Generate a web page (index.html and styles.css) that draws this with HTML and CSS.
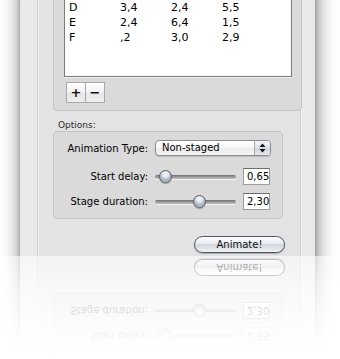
FILE: index.html
```html
<!DOCTYPE html>
<html>
<head>
<meta charset="utf-8">
<link rel="stylesheet" href="styles.css">
</head>
<body>
<div class="scene">
  <div class="window">
    <div class="column">
      <div class="group top-group">
        <div class="table">
          <div class="trow"><span>D</span><span>3,4</span><span>2,4</span><span>5,5</span></div>
          <div class="trow"><span>E</span><span>2,4</span><span>6,4</span><span>1,5</span></div>
          <div class="trow"><span>F</span><span>,2</span><span>3,0</span><span>2,9</span></div>
        </div>
        <div class="addremove">
          <button class="sq">+</button><button class="sq">−</button>
        </div>
      </div>
      <div class="options-label">Options:</div>
      <div class="group options">
        <div class="orow first">
          <span class="lbl">Animation Type:</span>
          <div class="popup">
            <span class="ptext">Non-staged</span>
            <span class="arrows">
              <svg width="7" height="10" viewBox="0 0 7 10"><path d="M3.5 0.5 L6.5 4 L0.5 4 Z" fill="#111"/><path d="M0.5 6 L6.5 6 L3.5 9.5 Z" fill="#111"/></svg>
            </span>
          </div>
        </div>
        <div class="orow">
          <span class="lbl">Start delay:</span>
          <div class="slider"><div class="track"></div><div class="knob" style="left:4px"></div></div>
          <div class="field">0,65</div>
        </div>
        <div class="orow">
          <span class="lbl">Stage duration:</span>
          <div class="slider"><div class="track"></div><div class="knob" style="left:38px"></div></div>
          <div class="field">2,30</div>
        </div>
      </div>
      <div class="actions">
        <button class="animate">Animate!</button>
      </div>
    </div>
  </div>
</div>
<div class="reflection" aria-hidden="true">
  <div class="scene flip">
    <div class="window">
      <div class="column">
        <div class="group top-group">
          <div class="table"></div>
          <div class="addremove">
            <span class="sq"></span><span class="sq"></span>
          </div>
        </div>
        <div class="options-label"></div>
        <div class="group options">
          <div class="orow first">
            <span class="lbl"></span>
            <div class="popup">
              <span class="ptext"></span>
              <span class="arrows"></span>
            </div>
          </div>
          <div class="orow">
            <span class="lbl">Start delay:</span>
            <div class="slider"><div class="track"></div><div class="knob" style="left:4px"></div></div>
            <div class="field">0,65</div>
          </div>
          <div class="orow">
            <span class="lbl">Stage duration:</span>
            <div class="slider"><div class="track"></div><div class="knob" style="left:38px"></div></div>
            <div class="field">2,30</div>
          </div>
        </div>
        <div class="actions">
          <button class="animate">Animate!</button>
        </div>
      </div>
    </div>
  </div>
</div>
</body>
</html>
```
FILE: styles.css
```css
html, body {
  margin: 0;
  padding: 0;
  background: #ffffff;
}
body {
  font-family: "DejaVu Sans", "Liberation Sans", sans-serif;
  font-size: 10px;
  color: #000;
  overflow: hidden;
}
.scene {
  width: 340px;
  height: 256px;
  overflow: hidden;
  background: #ffffff;
}
.reflection {
  position: relative;
  width: 340px;
  height: 103px;
  overflow: hidden;
}
.flip {
  transform: scaleY(-1);
}
.reflection::after {
  content: "";
  position: absolute;
  left: 0;
  top: 0;
  right: 0;
  bottom: 0;
  background: linear-gradient(to bottom, rgba(255,255,255,0.58) 0px, rgba(255,255,255,0.78) 35px, rgba(255,255,255,0.9) 65px, rgba(255,255,255,0.97) 85px, #ffffff 103px);
}
.window {
  margin-top: -20px;
  margin-left: 20px;
  width: 295px;
  height: 300px;
  background: #e9e9e9;
  box-shadow: 1px 2px 18px rgba(0,0,0,0.55), 0 0 3px rgba(0,0,0,0.25);
  display: flex;
}
.column {
  margin-left: 17px;
  width: 262px;
  border-left: 1px solid #cfcfcf;
  border-right: 1px solid #cfcfcf;
  box-shadow: inset 1px 0 0 #f2f2f2, 1px 0 0 #f4f4f4;
  background: #e3e3e3;
  display: flex;
  flex-direction: column;
}
.group {
  margin-left: 15px;
  width: 228px;
  border: 1px solid #c6c6c6;
  border-radius: 4px;
  background: #dadada;
}
.top-group {
  margin-top: 8px;
  padding: 9px 9px 7px 10px;
}
.table {
  box-sizing: border-box;
  height: 79px;
  background: #fff;
  border: 1px solid #7d7d7d;
  box-shadow: inset 0 0 1px rgba(0,0,0,0.3), 0 1px 0 rgba(255,255,255,0.6);
  padding: 1px 0 0 4px;
  font-size: 11px;
}
.trow {
  display: grid;
  grid-template-columns: 51px 51px 51px 51px;
  height: 15px;
  line-height: 15px;
}
.addremove {
  margin-top: 5px;
  margin-left: 2px;
  display: flex;
}
.sq {
  box-sizing: border-box;
  display: block;
  width: 20px;
  height: 21px;
  padding: 0;
  margin: 0;
  border: 1px solid #a9a9a9;
  background: linear-gradient(#ffffff, #f1f1f1 50%, #e6e6e6 51%, #eeeeee);
  font-family: "DejaVu Sans", sans-serif;
  font-size: 13px;
  font-weight: bold;
  line-height: 18px;
  text-align: center;
  color: #111;
}
.sq + .sq {
  border-left: none;
  width: 19px;
}
.options-label {
  margin-top: 8px;
  margin-left: 20px;
  height: 12px;
  line-height: 12px;
  font-size: 9px;
  color: #2a2a2a;
}
.options {
  padding: 8px 0 8px 0;
  display: flex;
  flex-direction: column;
  gap: 8px;
}
.orow {
  display: grid;
  grid-template-columns: 94px 81px 27px;
  column-gap: 7px;
  align-items: center;
  height: 17px;
}
.orow.first {
  height: 16px;
  margin-bottom: 4px;
}
.lbl {
  text-align: right;
  white-space: nowrap;
}
.popup {
  grid-column: 2 / 4;
  width: 116px;
  height: 16px;
  box-sizing: border-box;
  border: 1px solid #8c8c8c;
  border-radius: 4px;
  background: linear-gradient(#ffffff, #f6f6f6 50%, #ececec 51%, #f3f3f3);
  box-shadow: 0 1px 1px rgba(0,0,0,0.15);
  display: flex;
  align-items: center;
}
.ptext {
  flex: 1;
  padding-left: 6px;
  line-height: 14px;
}
.arrows {
  width: 15px;
  height: 14px;
  border-left: 1px solid #a8a8a8;
  display: flex;
  align-items: center;
  justify-content: center;
  background: linear-gradient(#f4f6f9, #dde2e8 50%, #cfd6de 51%, #e4e8ee);
  border-radius: 0 3px 3px 0;
}
.slider {
  position: relative;
  height: 17px;
  display: flex;
  align-items: center;
}
.track {
  width: 81px;
  height: 4px;
  border-radius: 2px;
  background: linear-gradient(#6f6f6f, #9a9a9a 50%, #c4c4c4);
  box-shadow: 0 1px 0 rgba(255,255,255,0.6);
}
.knob {
  position: absolute;
  top: 2px;
  width: 11px;
  height: 11px;
  border-radius: 50%;
  border: 1px solid #5d6268;
  background: radial-gradient(circle at 50% 30%, #fdfeff 0, #d9dfe6 35%, #a7b2be 60%, #c3ccd6 100%);
  box-shadow: 0 1px 1px rgba(0,0,0,0.3);
}
.field {
  width: 27px;
  height: 17px;
  box-sizing: border-box;
  background: #fff;
  border: 1px solid #9c9c9c;
  border-top-color: #6e6e6e;
  padding-left: 3px;
  line-height: 15px;
}
.actions {
  margin-top: 17px;
  padding-right: 15px;
  display: flex;
  justify-content: flex-end;
}
.animate {
  width: 91px;
  height: 17px;
  margin: 0;
  padding: 0;
  border: 1px solid #4f5560;
  border-radius: 9px;
  background: linear-gradient(#fbfcfd, #e9ecf0 45%, #d2d7de 50%, #e2e6eb 80%, #f1f3f6);
  box-shadow: 0 1px 1px rgba(0,0,0,0.25);
  font-family: "DejaVu Sans", sans-serif;
  font-size: 10px;
  line-height: 15px;
  color: #111;
}
```
